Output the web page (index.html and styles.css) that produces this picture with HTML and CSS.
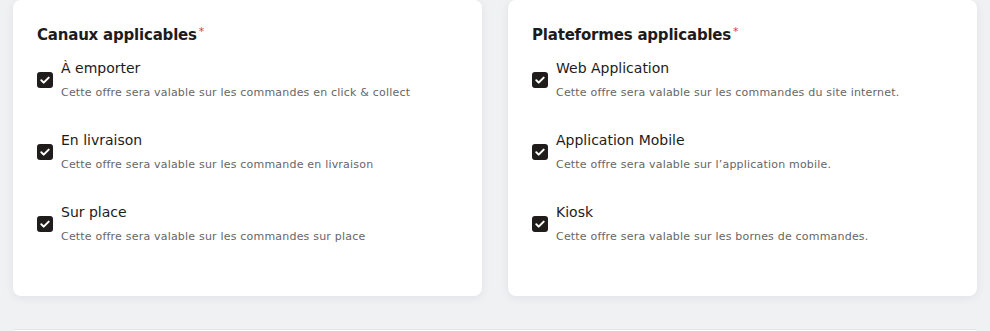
FILE: index.html
```html
<!DOCTYPE html>
<html lang="fr">
<head>
<meta charset="utf-8">
<link rel="stylesheet" href="styles.css">
</head>
<body>
<div class="page">
  <div class="cards">
    <section class="card">
      <h3 class="card-title">Canaux applicables<span class="req">*</span></h3>
      <div class="options">
        <label class="option">
          <span class="check"><svg viewBox="0 0 16 16" width="16" height="16"><path d="M4.3 8.2l2.4 2.4 5-5" fill="none" stroke="#fff" stroke-width="2" stroke-linecap="round" stroke-linejoin="round"/></svg></span>
          <span class="text"><span class="name">À emporter</span><span class="desc">Cette offre sera valable sur les commandes en click &amp; collect</span></span>
        </label>
        <label class="option">
          <span class="check"><svg viewBox="0 0 16 16" width="16" height="16"><path d="M4.3 8.2l2.4 2.4 5-5" fill="none" stroke="#fff" stroke-width="2" stroke-linecap="round" stroke-linejoin="round"/></svg></span>
          <span class="text"><span class="name">En livraison</span><span class="desc">Cette offre sera valable sur les commande en livraison</span></span>
        </label>
        <label class="option">
          <span class="check"><svg viewBox="0 0 16 16" width="16" height="16"><path d="M4.3 8.2l2.4 2.4 5-5" fill="none" stroke="#fff" stroke-width="2" stroke-linecap="round" stroke-linejoin="round"/></svg></span>
          <span class="text"><span class="name">Sur place</span><span class="desc">Cette offre sera valable sur les commandes sur place</span></span>
        </label>
      </div>
    </section>
    <section class="card">
      <h3 class="card-title">Plateformes applicables<span class="req">*</span></h3>
      <div class="options">
        <label class="option">
          <span class="check"><svg viewBox="0 0 16 16" width="16" height="16"><path d="M4.3 8.2l2.4 2.4 5-5" fill="none" stroke="#fff" stroke-width="2" stroke-linecap="round" stroke-linejoin="round"/></svg></span>
          <span class="text"><span class="name">Web Application</span><span class="desc">Cette offre sera valable sur les commandes du site internet.</span></span>
        </label>
        <label class="option">
          <span class="check"><svg viewBox="0 0 16 16" width="16" height="16"><path d="M4.3 8.2l2.4 2.4 5-5" fill="none" stroke="#fff" stroke-width="2" stroke-linecap="round" stroke-linejoin="round"/></svg></span>
          <span class="text"><span class="name">Application Mobile</span><span class="desc">Cette offre sera valable sur l’application mobile.</span></span>
        </label>
        <label class="option">
          <span class="check"><svg viewBox="0 0 16 16" width="16" height="16"><path d="M4.3 8.2l2.4 2.4 5-5" fill="none" stroke="#fff" stroke-width="2" stroke-linecap="round" stroke-linejoin="round"/></svg></span>
          <span class="text"><span class="name">Kiosk</span><span class="desc">Cette offre sera valable sur les bornes de commandes.</span></span>
        </label>
      </div>
    </section>
  </div>
  <section class="card next"></section>
</div>
</body>
</html>
```
FILE: styles.css
```css
* { box-sizing: border-box; }
html, body { margin: 0; padding: 0; }
body {
  background: #f0f1f3;
  font-family: "DejaVu Sans", "Open Sans", sans-serif;
  color: #1d1b1b;
  overflow: hidden;
  height: 331px;
}
.page {
  padding: 0 13px;
  display: flex;
  flex-direction: column;
  gap: 33px;
}
.cards {
  display: grid;
  grid-template-columns: 1fr 1fr;
  gap: 26px;
}
.card {
  background: #fff;
  border-radius: 8px;
  box-shadow: 0 2px 10px rgba(30, 35, 50, 0.07);
  padding: 25px 24px 0;
  height: 296px;
}
.card-title {
  margin: 0;
  font-size: 15px;
  line-height: 20px;
  font-weight: 700;
  letter-spacing: -0.2px;
}
.req { color: #e53a3a; font-size: 11px; font-weight: 400; vertical-align: top; margin-left: 2px; line-height: 14px; }
.options {
  display: flex;
  flex-direction: column;
  gap: 31px;
  margin-top: 14px;
}
.option {
  display: flex;
  align-items: center;
  gap: 8px;
}
.check {
  width: 16px;
  height: 16px;
  border-radius: 3px;
  background: #1f1c1b;
  display: flex;
  flex: none;
}
.text {
  display: flex;
  flex-direction: column;
  gap: 9px;
}
.name {
  font-size: 14px;
  line-height: 18px;
  color: #1d1b1b;
}
.desc {
  font-size: 11px;
  line-height: 14px;
  letter-spacing: 0.2px;
  color: #666;
}
.card.next {
  height: 2px;
  padding: 0;
  border-top: 1px solid #e2e3e6;
  box-shadow: none;
  border-radius: 4px 4px 0 0;
}
```
